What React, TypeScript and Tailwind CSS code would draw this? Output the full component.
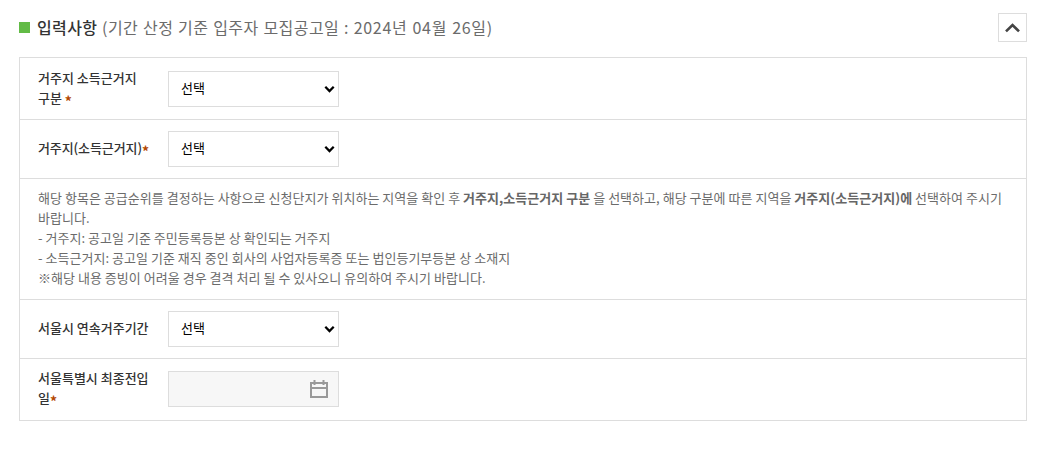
import type { ReactNode } from 'react';

function Required() {
  return <span className="relative top-[4px] text-[14px] leading-none font-bold text-[#b34700]">*</span>;
}

function SelectBox({ label }: { label: string }) {
  return (
    <button
      type="button"
      className="flex h-9 w-[171px] items-center justify-between border border-[#dddddd] bg-white pr-[3px] pl-3 text-[13px] text-black"
    >
      <span className="-mt-0.5">{label}</span>
      <svg width="11" height="8" viewBox="0 0 11 8" fill="none" stroke="currentColor" strokeWidth="2.3">
        <path d="M1.3 1.8 5.5 6 9.7 1.8" />
      </svg>
    </button>
  );
}

function DateBox() {
  return (
    <div className="flex h-9 w-[171px] items-center justify-end border border-[#dddddd] bg-[#f7f7f7] pr-2.5">
      <svg width="18" height="18" viewBox="0 0 18 18" fill="none" stroke="#999999">
        <path d="M1 3v14h16V3Z" strokeWidth="2" />
        <path d="M1 8h16" strokeWidth="2" />
        <path d="M4.5 0v5M13.5 0v5" strokeWidth="2" />
      </svg>
    </div>
  );
}

function FieldRow({ label, className, children }: { label: ReactNode; className: string; children: ReactNode }) {
  return (
    <div className={`flex items-center border-b border-[#dddddd] ${className}`}>
      <div className="-mt-0.5 w-[130px] text-[13px] leading-5 font-medium whitespace-nowrap text-[#333333]">{label}</div>
      {children}
    </div>
  );
}

export default function App() {
  return (
    <div className="h-[453px] w-[1050px] bg-white pt-[13px] pr-[23px] pl-[19px] font-['Noto_Sans_CJK_KR',sans-serif]">
      <div className="flex h-[29px] items-center">
        <span className="size-[11px] bg-[#62bb46]" />
        <h2 className="-mt-0.5 ml-[7px] text-base leading-6 font-medium whitespace-nowrap text-[#333333]">
          <span className="tracking-[0.4px]">입력사항</span>{' '}
          <span className="ml-px font-normal tracking-[0.45px] text-[#6b6b6b] [word-spacing:0.7px]">
            (기간 산정 기준 입주자 모집공고일 : <span className="tracking-[0.72px]">2024년 04월 26일)</span>
          </span>
        </h2>
        <button
          type="button"
          aria-label="접기"
          className="ml-auto flex size-[29px] items-center justify-center border border-[#dddddd] text-[#444444]"
        >
          <svg width="15" height="10" viewBox="0 0 15 10" fill="none" stroke="currentColor" strokeWidth="2.6">
            <path d="M1 8.4 7.5 2l6.5 6.4" />
          </svg>
        </button>
      </div>

      <div className="mt-[15px] border border-b-0 border-[#dddddd] [&>div]:pl-[18px]">
        <FieldRow className="h-[62px] pt-px" label={<>거주지 소득근거지<br />구분 <Required /></>}>
          <SelectBox label="선택" />
        </FieldRow>
        <FieldRow className="h-[59px]" label={<><span className="tracking-[-0.1px]">거주지(소득근거지)</span><Required /></>}>
          <SelectBox label="선택" />
        </FieldRow>
        <div className="h-[121px] border-b border-[#dddddd] pt-[9px] text-[13px] leading-5 tracking-[0.03px] whitespace-nowrap text-[#6b6b6b]">
          <p>
            해당 항목은 공급순위를 결정하는 사항으로 신청단지가 위치하는 지역을 확인 후 <b className="font-bold text-[#666666]">거주지,소득근거지 구분</b> 을
            {' '}선택하고, 해당 구분에 따른 지역을 <b className="font-bold text-[#666666]">거주지(소득근거지)에</b> 선택하여 주시기
          </p>
          <p>바랍니다.</p>
          <p>- 거주지: 공고일 기준 주민등록등본 상 확인되는 거주지</p>
          <p>- 소득근거지: 공고일 기준 재직 중인 회사의 사업자등록증 또는 법인등기부등본 상 소재지</p>
          <p>※해당 내용 증빙이 어려울 경우 결격 처리 될 수 있사오니 유의하여 주시기 바랍니다.</p>
        </div>
        <FieldRow className="h-[59px]" label="서울시 연속거주기간">
          <SelectBox label="선택" />
        </FieldRow>
        <FieldRow className="h-[62px] pb-px" label={<>서울특별시 최종전입<br />일<Required /></>}>
          <DateBox />
        </FieldRow>
      </div>
    </div>
  );
}
